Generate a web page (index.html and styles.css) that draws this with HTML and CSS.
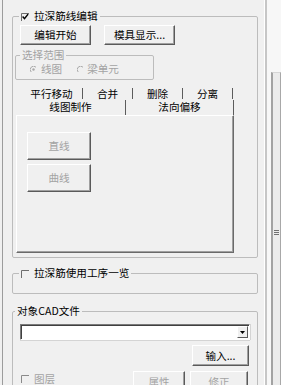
FILE: index.html
```html
<!DOCTYPE html>
<html>
<head>
<meta charset="utf-8">
<link rel="stylesheet" href="styles.css">
</head>
<body>
<div class="window">
  <div class="panel">
    <fieldset class="group main">
      <legend class="lg-chk"><svg class="chk" width="8" height="8" viewBox="0 0 8 8"><path d="M0.5 8V0.5H8" stroke="#6e6e6e" fill="none"/><path d="M1.6 3.6l1.9 2.1 3.6-4.6" stroke="#000" stroke-width="1.5" fill="none"/></svg>拉深筋线编辑</legend>
      <div class="btnrow">
        <button class="btn top">编辑开始</button>
        <button class="btn top">模具显示...</button>
      </div>
      <fieldset class="group range">
        <legend class="lg-range">选择范围</legend>
        <div class="radios">
          <svg class="radio" width="7" height="7" viewBox="0 0 7 7"><path d="M6 1.2A3 3 0 0 0 1.2 6" stroke="#a8a8a8" fill="none"/><circle cx="3.5" cy="3.5" r="1.2" fill="#a8a8a8"/></svg><span class="rtext">线图</span>
          <svg class="radio r2" width="7" height="7" viewBox="0 0 7 7"><path d="M6 1.2A3 3 0 0 0 1.2 6" stroke="#a8a8a8" fill="none"/></svg><span class="rtext">梁单元</span>
        </div>
      </fieldset>
      <div class="tabs">
        <div class="tabrow row1">
          <div class="tab t62">平行移动</div>
          <div class="tab t50">合并</div>
          <div class="tab t50">删除</div>
          <div class="tab t50">分离</div>
        </div>
        <div class="tabrow row2">
          <div class="tab t110">线图制作</div>
          <div class="tab t108">法向偏移</div>
        </div>
        <div class="tabpage">
          <button class="btn big dis">直线</button>
          <button class="btn big dis">曲线</button>
        </div>
      </div>
    </fieldset>

    <fieldset class="group usage">
      <legend class="lg-chk"><svg class="chk" width="8" height="8" viewBox="0 0 8 8"><path d="M0.5 8V0.5H8" stroke="#6e6e6e" fill="none"/></svg>拉深筋使用工序一览</legend>
      <div class="usage-body"></div>
    </fieldset>

    <fieldset class="group cad">
      <legend class="lg-cad">对象CAD文件</legend>
      <div class="combo">
        <div class="combo-text"></div>
        <div class="drop"><svg width="5" height="3" viewBox="0 0 5 3"><path d="M0 0H5L2.5 3Z" fill="#000"/></svg></div>
      </div>
      <div class="inrow"><button class="btn input">输入...</button></div>
      <div class="lastrow">
        <span class="layer"><svg class="chk" width="8" height="8" viewBox="0 0 8 8"><path d="M0.5 8V0.5H8" stroke="#8a8a8a" fill="none"/></svg><span class="distext">图层</span></span>
        <button class="btn small dis prop">属性</button>
        <button class="btn small dis fix">修正</button>
      </div>
    </fieldset>
  </div>
  <div class="scrollbar">
    <div class="thumb"><span class="grip"></span></div>
  </div>
</div>
</body>
</html>
```
FILE: styles.css
```css
* { box-sizing: border-box; }
html, body { margin: 0; padding: 0; }
body {
  width: 281px;
  height: 385px;
  overflow: hidden;
  background: #f0f0f0;
  font-family: "Noto Sans CJK SC", "Noto Sans", sans-serif;
  font-size: 10.6px;
  line-height: 12px;
  color: #000;
}
.window { display: flex; height: 385px; }
.panel {
  margin-left: 2px;
  width: 263px;
  height: 385px;
  border-left: 1px solid #9c9c9c;
  border-right: 1px solid #ffffff;
}

.group {
  margin: 0 0 0 9px;
  padding: 0;
  width: 246px;
  min-width: 0;
  border: 1px solid #bcbcbc;
  border-radius: 2px;
}
.group > legend {
  padding: 0 2px;
  height: 12px;
  line-height: 12px;
  white-space: nowrap;
}
.lg-chk { margin-left: 6px; }
.chk { display: inline-block; vertical-align: -1px; margin-right: 5px; }

.main { margin-top: 10px; padding-bottom: 4px; }

.btn {
  font: inherit;
  color: #000;
  background: #f0f0f0;
  border: 1px solid;
  border-color: #ffffff #5a5a5a #5a5a5a #ffffff;
  box-shadow: inset -1px -1px #a0a0a0;
  padding: 0;
  margin: 0;
  display: block;
  text-align: center;
}
.btn.dis { color: #a3a3a3; }

.btnrow { display: flex; gap: 13px; margin: 3px 0 0 7px; }
.btn.top { width: 71px; height: 20px; }

.range {
  width: 139px;
  margin: 4px 0 0 2px;
  padding-bottom: 4px;
  color: #a3a3a3;
}
.lg-range { margin-left: 4px; }
.radios { display: flex; align-items: center; height: 12px; margin-top: 2px; padding-left: 14px; }
.radio { display: block; margin-right: 4px; }
.radio.r2 { margin-left: 15px; margin-right: 3px; }

.tabs { margin: 7px 0 0 3px; width: 218px; }
.tabrow { display: flex; }
.row1 { margin-left: 5px; height: 12px; }
.row2 { height: 16px; }
.tab { text-align: center; border-right: 1px solid #5c5c5c; }
.row1 .tab { height: 11px; margin-top: 1px; line-height: 11px; }
.row2 .tab { height: 15px; margin-top: 1px; line-height: 13px; }
.t62 { width: 62px; }
.t50 { width: 50px; }
.t110 { width: 110px; }
.t108 { width: 108px; }

.tabpage {
  height: 138px;
  border-top: 1px solid #ffffff;
  border-left: 1px solid #ffffff;
  border-right: 1px solid #6a6a6a;
  border-bottom: 1px solid #6a6a6a;
  box-shadow: inset -1px -1px #a0a0a0;
  padding: 16px 0 0 10px;
}
.btn.big { width: 64px; height: 28px; margin-bottom: 4px; }

.usage { margin-top: 9px; }
.usage-body { height: 14px; }

.cad { margin-top: 11px; height: 100px; }
.lg-cad { margin-left: 2px; }
.combo {
  display: flex;
  justify-content: flex-end;
  align-items: center;
  width: 230px;
  height: 16px;
  margin: 7px 0 0 7px;
  background: #ffffff;
  border-top: 1px solid #7a7a7a;
  border-left: 1px solid #7a7a7a;
  border-bottom: 1px solid #ffffff;
  border-right: 1px solid #ffffff;
  box-shadow: inset 1px 1px #404040, 0 1px #d4d4d4, 1px 0 #d4d4d4;
}
.combo-text { flex: 1; }
.drop {
  width: 11px;
  height: 12px;
  margin-right: 1px;
  background: #f0f0f0;
  border: 1px solid;
  border-color: #ffffff #5a5a5a #5a5a5a #ffffff;
  display: flex;
  align-items: center;
  justify-content: center;
}
.drop svg { display: block; }
.inrow { display: flex; justify-content: flex-end; margin: 5px 8px 0 0; }
.btn.input { width: 57px; height: 21px; }
.lastrow { display: flex; align-items: flex-start; margin: 5px 0 0 0; }
.layer { display: flex; align-items: center; padding: 2px 0 0 8px; width: 120px; }
.layer .chk { margin-right: 5px; }
.distext { color: #a3a3a3; }
.btn.small { height: 21px; }
.btn.prop { width: 52px; }
.btn.fix { width: 58px; margin-left: 5px; }

.scrollbar {
  width: 16px;
  height: 385px;
  border-left: 2px solid #c6c6c6;
  background: #f7f7f7;
  padding: 72px 0 0 4px;
}
.thumb {
  height: 330px;
  background: #ebebeb;
  border-left: 2px solid #a2a2a2;
  border-right: 1px solid #a8a8a8;
  border-top: 1px solid #d6d6d6;
  padding-top: 157px;
  display: flex;
  justify-content: center;
}
.grip {
  display: block;
  width: 5px;
  height: 5px;
  background: repeating-linear-gradient(#707070 0 1px, transparent 1px 2px);
}
```
